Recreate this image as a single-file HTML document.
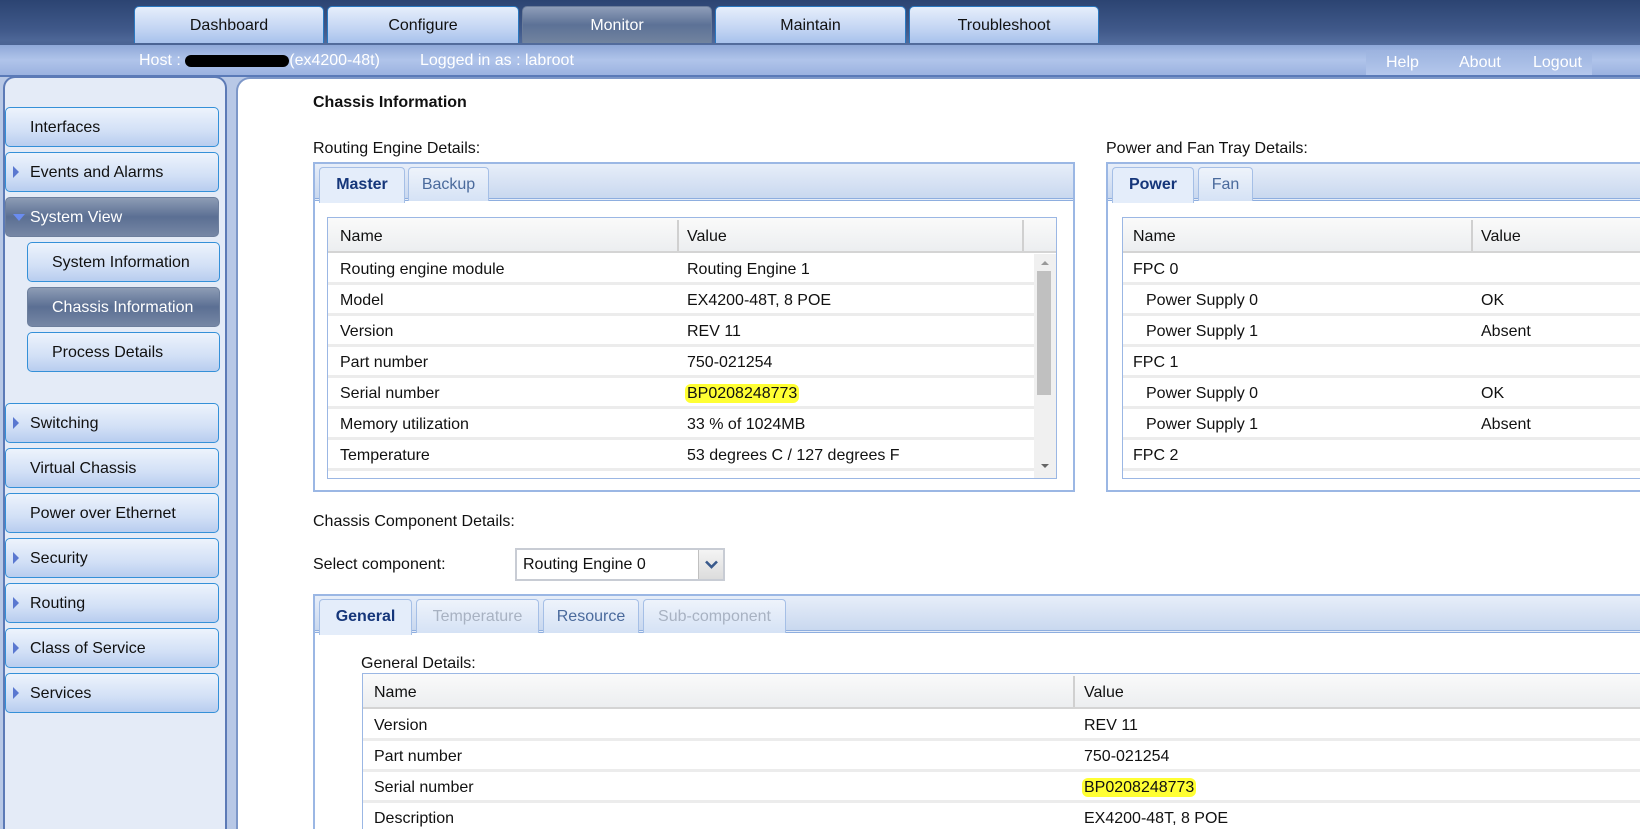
<!DOCTYPE html>
<html><head><meta charset="utf-8"><style>
*{box-sizing:border-box;margin:0;padding:0}
html,body{width:1640px;height:829px;overflow:hidden}
body{font-family:"Liberation Sans",Arial,sans-serif;font-size:16px;color:#111;background:#b8c8e6}
#wrap{position:relative;width:1640px;height:829px;overflow:hidden}
.a{position:absolute}
#top{left:0;top:0;width:1640px;height:50px;background:linear-gradient(#2c4472,#40598a 60%,#5a73a3)}
#hostbar{left:0;top:45px;width:1640px;height:32px;background:linear-gradient(#8fa8d8,#b0c4ea 50%,#9bb2e0);border-bottom:2px solid #5a7ab8}
.tab{position:absolute;top:6px;height:37px;border:1px solid #2a78c0;border-bottom:none;border-radius:5px 5px 0 0;background:linear-gradient(#e6eefb,#c3d5f3 60%,#a8c2ec);text-align:center;line-height:38px;font-size:16px;color:#111}
.tab.on{background:linear-gradient(#8e9db8,#5c7196 50%,#72849f);color:#fff;border-color:#6a7c9a}
.hb{color:#fff;font-size:16px;top:52px}
#side{left:3px;top:76px;width:224px;height:753px;background:#e4ebf7;border:2px solid #5c7ab6;border-bottom:none;border-radius:12px 12px 0 0}
.it{position:absolute;left:5px;width:214px;height:40px;border:1px solid #3490d8;border-radius:5px;background:linear-gradient(#edf3fc,#d2e0f6 60%,#b8cdef);line-height:39px;padding-left:24px;font-size:16px}
.it.on{background:linear-gradient(#8d9cb5,#5b6f93 50%,#7687a5);color:#fff;border-color:#6d7f9d}
.it.sub{left:27px;width:193px;padding-left:24px}
.ar{position:absolute;left:7px;top:13px;width:0;height:0;border-top:6px solid transparent;border-bottom:6px solid transparent;border-left:6px solid #5a78d0}
.ar.dn{top:16px;left:7px;border-left:6px solid transparent;border-right:6px solid transparent;border-top:7px solid #6a8cf0;border-bottom:none}
#main{left:236px;top:77px;width:1404px;height:752px;background:#fff;border-left:2px solid #7d97c8;border-top:2px solid #7d97c8;border-radius:14px 0 0 0}
.panel{position:absolute;border:2px solid #9bb7e4;background:#fff}
.strip{position:absolute;left:0;top:0;right:0;height:37px;background:linear-gradient(#e7eef9,#c9d8ef);border-bottom:3px double #8eaedf}
.pt{position:absolute;top:3px;height:34px;border:1px solid #a5bfe6;border-bottom:none;border-radius:4px 4px 0 0;background:linear-gradient(#eef3fb,#d5e2f5);text-align:center;line-height:33px;font-size:16px;color:#4a6a9c}
.pt.on{background:#e4edfa;color:#15367a;font-weight:bold;height:36px}
.pt.dis{color:#a8b2c2}
.tbl{position:absolute;border:1px solid #9bb7e4;background:#fff;overflow:hidden}
.hdr{position:absolute;left:0;top:0;right:0;height:35px;background:linear-gradient(#fafafa,#eceef0);border-bottom:2px solid #d4d4d4}
.row{position:absolute;left:0;height:31px;border-bottom:3px solid #ececec;width:100%}
.t{position:absolute;white-space:nowrap;font-size:16px}
.hl{background:#ffff33;border-radius:6px;padding:1px 2px;margin-left:-2px}
</style></head><body><div id="wrap">
<div class="a" id="top"></div>
<div class="a" style="left:0;top:40px;width:250px;height:30px;background:linear-gradient(#4d6696,#3a5283)"></div>
<div class="a" id="hostbar"></div>
<div class="tab" style="left:134px;width:190px">Dashboard</div>
<div class="tab" style="left:327px;width:192px">Configure</div>
<div class="tab on" style="left:522px;width:190px">Monitor</div>
<div class="tab" style="left:715px;width:191px">Maintain</div>
<div class="tab" style="left:909px;width:190px">Troubleshoot</div>
<div class="a hb" style="left:139px">Host : <span style="display:inline-block;width:104px;height:12px;background:#000;border-radius:6px;vertical-align:middle"></span>(ex4200-48t)</div>
<div class="a hb" style="left:420px">Logged in as : labroot</div>
<div class="a" style="left:1366px;top:50px;width:226px;height:25px;background:linear-gradient(#9cb3df,#b4c7ec)"></div>
<div class="a hb" style="left:1386px;top:54px">Help</div>
<div class="a hb" style="left:1459px;top:54px">About</div>
<div class="a hb" style="left:1533px;top:54px">Logout</div>

<div class="a" id="side"></div>
<div class="it" style="top:107px">Interfaces</div>
<div class="it" style="top:152px"><span class="ar"></span>Events and Alarms</div>
<div class="it on" style="top:197px"><span class="ar dn"></span>System View</div>
<div class="it sub" style="top:242px">System Information</div>
<div class="it sub on" style="top:287px">Chassis Information</div>
<div class="it sub" style="top:332px">Process Details</div>
<div class="it" style="top:403px"><span class="ar"></span>Switching</div>
<div class="it" style="top:448px">Virtual Chassis</div>
<div class="it" style="top:493px">Power over Ethernet</div>
<div class="it" style="top:538px"><span class="ar"></span>Security</div>
<div class="it" style="top:583px"><span class="ar"></span>Routing</div>
<div class="it" style="top:628px"><span class="ar"></span>Class of Service</div>
<div class="it" style="top:673px"><span class="ar"></span>Services</div>

<div class="a" id="main"></div>
<div class="t" style="left:313px;top:94px;font-weight:bold">Chassis Information</div>
<div class="t" style="left:313px;top:140px">Routing Engine Details:</div>
<div class="t" style="left:1106px;top:140px">Power and Fan Tray Details:</div>

<div class="panel" style="left:313px;top:162px;width:762px;height:330px">
 <div class="strip"><div class="pt on" style="left:4px;width:86px">Master</div><div class="pt" style="left:93px;width:81px">Backup</div></div>
</div>
<div class="tbl" style="left:327px;top:217px;width:730px;height:262px">
 <div class="hdr"><div class="t" style="left:12px;top:10px">Name</div><div class="a" style="left:349px;top:2px;width:2px;height:31px;background:#d0d0d0"></div><div class="t" style="left:359px;top:10px">Value</div><div class="a" style="left:694px;top:2px;width:2px;height:31px;background:#d0d0d0"></div></div>
 <div class="row" style="top:36px"><div class="t" style="left:12px;top:7px">Routing engine module</div><div class="t" style="left:359px;top:7px">Routing Engine 1</div></div>
 <div class="row" style="top:67px"><div class="t" style="left:12px;top:7px">Model</div><div class="t" style="left:359px;top:7px">EX4200-48T, 8 POE</div></div>
 <div class="row" style="top:98px"><div class="t" style="left:12px;top:7px">Version</div><div class="t" style="left:359px;top:7px">REV 11</div></div>
 <div class="row" style="top:129px"><div class="t" style="left:12px;top:7px">Part number</div><div class="t" style="left:359px;top:7px">750-021254</div></div>
 <div class="row" style="top:160px"><div class="t" style="left:12px;top:7px">Serial number</div><div class="t" style="left:359px;top:7px"><span class="hl">BP0208248773</span></div></div>
 <div class="row" style="top:191px"><div class="t" style="left:12px;top:7px">Memory utilization</div><div class="t" style="left:359px;top:7px">33 % of 1024MB</div></div>
 <div class="row" style="top:222px"><div class="t" style="left:12px;top:7px">Temperature</div><div class="t" style="left:359px;top:7px">53 degrees C / 127 degrees F</div></div>
 <div class="a" style="left:706px;top:36px;width:22px;height:226px;background:#f0f0f0"><div class="a" style="left:7px;top:7px;border-left:4px solid transparent;border-right:4px solid transparent;border-bottom:4px solid #999"></div><div class="a" style="left:3px;top:17px;width:14px;height:124px;background:#c0c0c0"></div><div class="a" style="left:7px;top:210px;border-left:4px solid transparent;border-right:4px solid transparent;border-top:4px solid #666"></div></div>
</div>

<div class="panel" style="left:1106px;top:162px;width:534px;height:330px;border-right:none">
 <div class="strip"><div class="pt on" style="left:4px;width:82px">Power</div><div class="pt" style="left:90px;width:55px">Fan</div></div>
</div>
<div class="tbl" style="left:1122px;top:217px;width:518px;height:262px;border-right:none">
 <div class="hdr"><div class="t" style="left:10px;top:10px">Name</div><div class="a" style="left:348px;top:2px;width:2px;height:31px;background:#d0d0d0"></div><div class="t" style="left:358px;top:10px">Value</div></div>
 <div class="row" style="top:36px"><div class="t" style="left:10px;top:7px">FPC 0</div></div>
 <div class="row" style="top:67px"><div class="t" style="left:23px;top:7px">Power Supply 0</div><div class="t" style="left:358px;top:7px">OK</div></div>
 <div class="row" style="top:98px"><div class="t" style="left:23px;top:7px">Power Supply 1</div><div class="t" style="left:358px;top:7px">Absent</div></div>
 <div class="row" style="top:129px"><div class="t" style="left:10px;top:7px">FPC 1</div></div>
 <div class="row" style="top:160px"><div class="t" style="left:23px;top:7px">Power Supply 0</div><div class="t" style="left:358px;top:7px">OK</div></div>
 <div class="row" style="top:191px"><div class="t" style="left:23px;top:7px">Power Supply 1</div><div class="t" style="left:358px;top:7px">Absent</div></div>
 <div class="row" style="top:222px"><div class="t" style="left:10px;top:7px">FPC 2</div></div>
</div>

<div class="t" style="left:313px;top:513px">Chassis Component Details:</div>
<div class="t" style="left:313px;top:556px">Select component:</div>
<div class="a" style="left:515px;top:548px;width:210px;height:33px;border:2px solid #c8ccd4;background:#fff"><div class="t" style="left:6px;top:6px">Routing Engine 0</div><div class="a" style="right:0;top:0;width:25px;height:29px;background:linear-gradient(#f4f4f4,#dcdcdc);border-left:1px solid #c0c0c0"><svg class="a" style="left:6px;top:10px" width="13" height="9" viewBox="0 0 13 9"><path d="M1 1.5L6.5 7L12 1.5" stroke="#3a5a8c" stroke-width="2.6" fill="none"/></svg></div></div>

<div class="panel" style="left:313px;top:594px;width:1327px;height:235px;border-right:none;border-bottom:none">
 <div class="strip"><div class="pt on" style="left:4px;width:93px">General</div><div class="pt dis" style="left:101px;width:123px">Temperature</div><div class="pt" style="left:228px;width:96px">Resource</div><div class="pt dis" style="left:328px;width:143px">Sub-component</div></div>
</div>
<div class="t" style="left:361px;top:655px">General Details:</div>
<div class="tbl" style="left:362px;top:673px;width:1278px;height:156px;border-right:none;border-bottom:none">
 <div class="hdr"><div class="t" style="left:11px;top:10px">Name</div><div class="a" style="left:710px;top:2px;width:2px;height:31px;background:#d0d0d0"></div><div class="t" style="left:721px;top:10px">Value</div></div>
 <div class="row" style="top:36px"><div class="t" style="left:11px;top:7px">Version</div><div class="t" style="left:721px;top:7px">REV 11</div></div>
 <div class="row" style="top:67px"><div class="t" style="left:11px;top:7px">Part number</div><div class="t" style="left:721px;top:7px">750-021254</div></div>
 <div class="row" style="top:98px"><div class="t" style="left:11px;top:7px">Serial number</div><div class="t" style="left:721px;top:7px"><span class="hl">BP0208248773</span></div></div>
 <div class="row" style="top:129px;height:27px;border-bottom:none"><div class="t" style="left:11px;top:7px">Description</div><div class="t" style="left:721px;top:7px">EX4200-48T, 8 POE</div></div>
</div>
</div></body></html>
